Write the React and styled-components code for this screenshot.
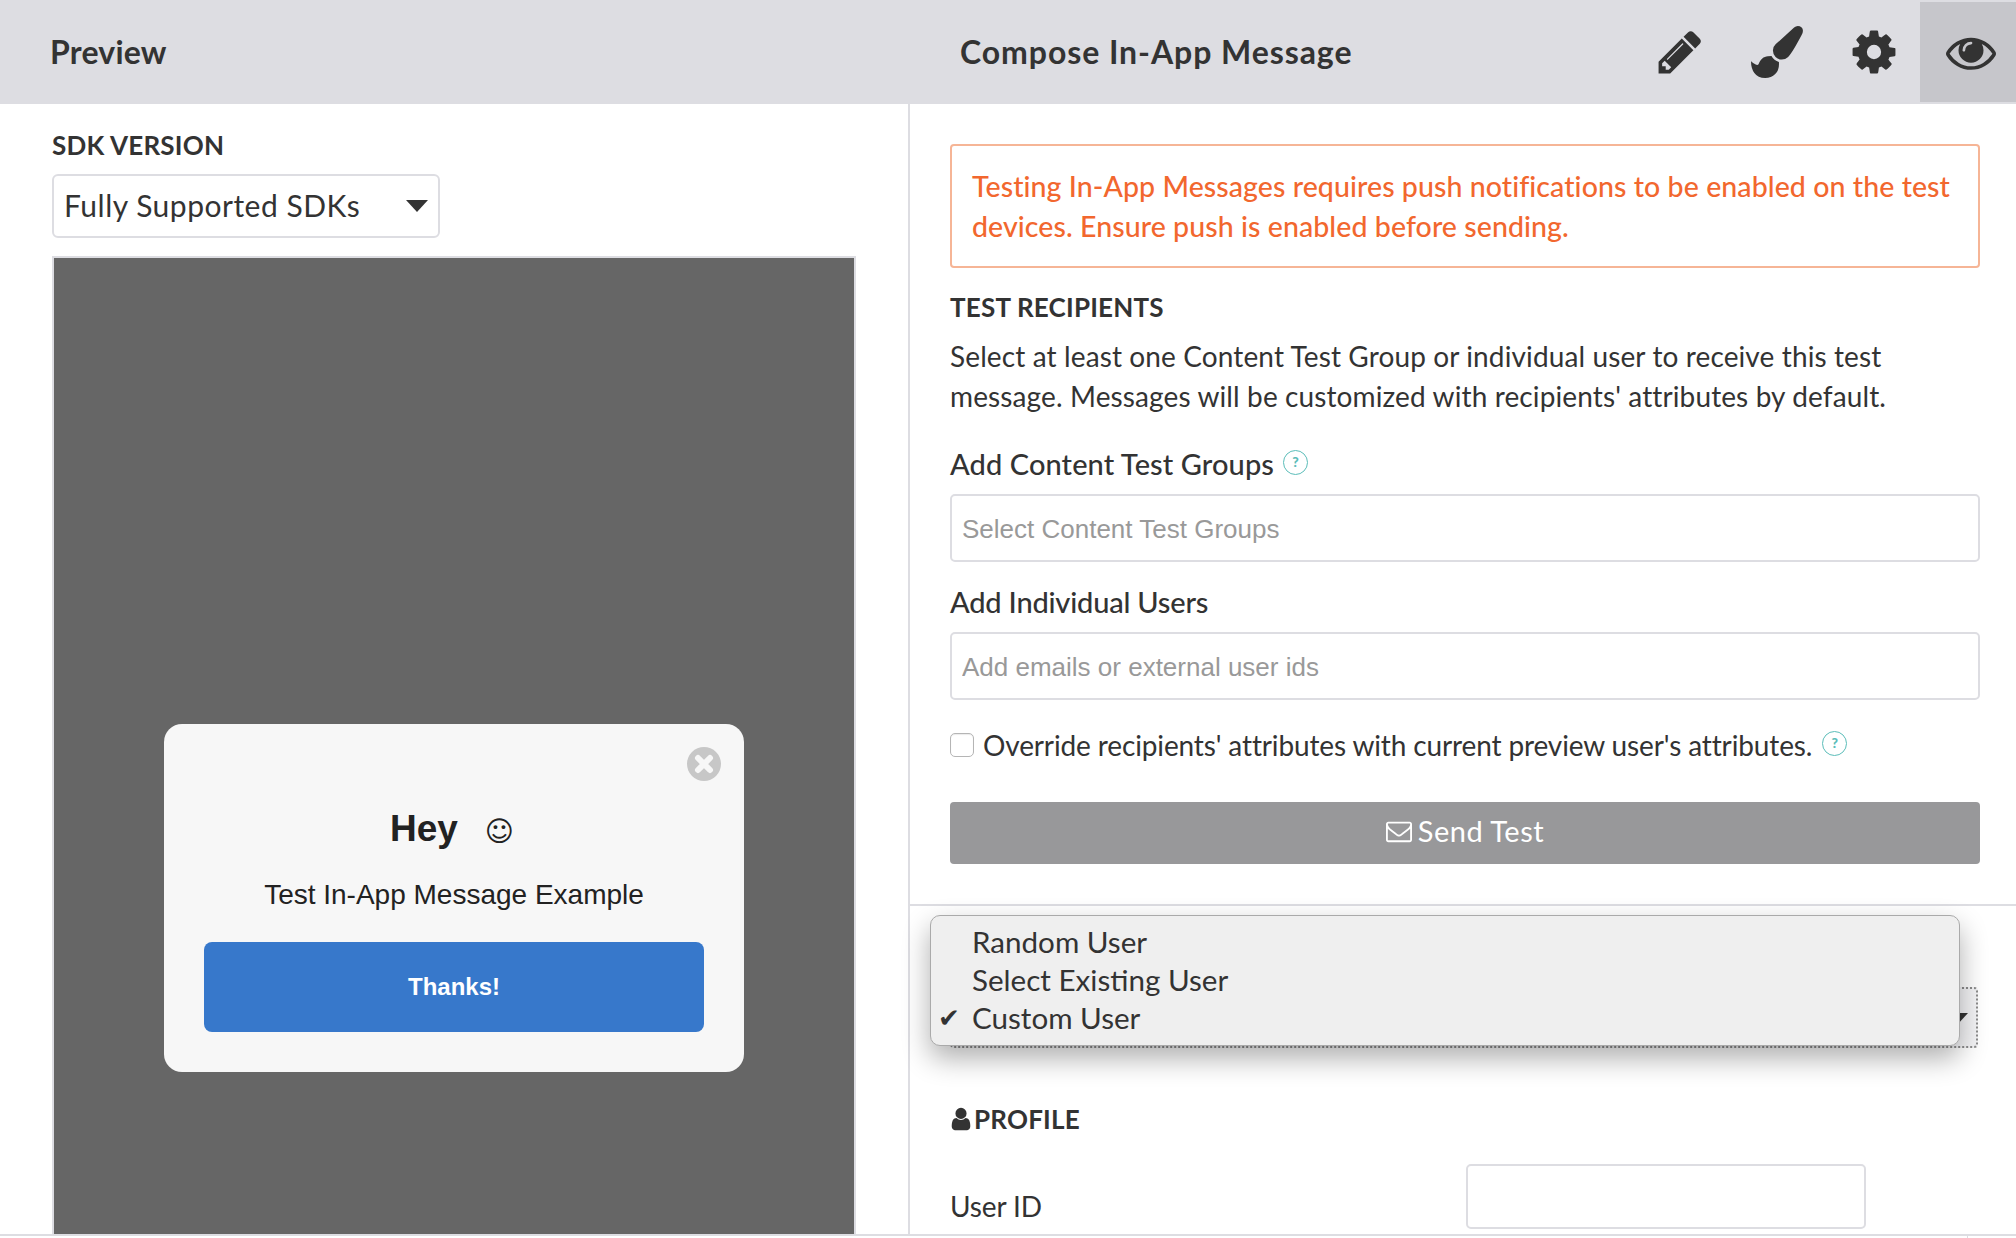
import React from 'react';
import styled, {createGlobalStyle} from 'styled-components';

const GlobalStyle = createGlobalStyle`
  html, body {
    margin: 0;
    padding: 0;
    background: #fff;
  }
  body {
    font-family: "Lato", "Liberation Sans", sans-serif;
    color: #333;
  }
`;

const ICONS = {
  pencil: 'M491 1536l91-91-235-235-91 91v107h128v128h107zm523-928q0-22-22-22-10 0-17 7l-542 542q-7 7-7 17 0 22 22 22 10 0 17-7l542-542q7-7 7-17zm-54-192l416 416-832 832h-416v-416zm683 96q0 53-37 90l-166 166-416-416 166-165q36-38 90-38 53 0 91 38l235 234q37 39 37 91z',
  brush: 'M1615 0q70 0 122.500 46.500t52.500 116.500q0 63-45 151-332 629-465 752-97 91-218 91-126 0-216.500-92.500t-90.500-219.500q0-128 92-212l638-579q59-54 130-54zm-909 1034q39 76 106.500 130t150.500 76l1 71q4 213-129.500 347t-348.500 134q-123 0-218-46.500t-152.500-127.500-86.500-183-29-220q7 5 41 30t62 44.500 59 36.500 46 17q41 0 55-37 25-66 57.500-112.500t69.500-76 88-47.500 103-25.500 125-10.500z',
  cog: 'M1152 896q0-106-75-181t-181-75-181 75-75 181 75 181 181 75 181-75 75-181zm512-109v222q0 12-8 23t-20 13l-185 28q-19 54-39 91 35 50 107 138 10 12 10 25t-9 23q-27 37-99 108t-94 71q-12 0-26-9l-138-108q-44 23-91 38-16 136-29 186-7 28-36 28h-222q-14 0-24.500-8.500t-11.500-21.500l-28-184q-49-16-90-37l-141 107q-10 9-25 9-14 0-25-11-126-114-165-168-7-10-7-23 0-12 8-23 15-21 51-66.500t54-70.500q-27-50-41-99l-183-27q-13-2-21-12.500t-8-23.500v-222q0-12 8-23t19-13l186-28q14-46 39-92-40-57-107-138-10-12-10-24 0-10 9-23 26-36 98.500-107.500t94.500-71.500q13 0 26 10l138 107q44-23 91-38 16-136 29-186 7-28 36-28h222q14 0 24.500 8.500t11.500 21.500l28 184q49 16 90 37l142-107q9-9 24-9 13 0 25 10 129 119 165 170 7 8 7 22 0 12-8 23-15 21-51 66.500t-54 70.500q26 50 41 98l183 28q13 2 21 12.500t8 23.500z',
  eye: 'M1664 960q-152-236-381-353 61 104 61 225 0 185-131.500 316.500t-316.500 131.500-316.500-131.500-131.500-316.500q0-121 61-225-229 117-381 353 133 205 333.500 326.500t434.500 121.500 434.500-121.500 333.500-326.500zm-720-384q0-20-14-34t-34-14q-125 0-214.500 89.500t-89.500 214.500q0 20 14 34t34 14 34-14 14-34q0-86 61-147t147-61q20 0 34-14t14-34zm848 384q0 34-20 69-140 230-376.500 368.500t-499.500 138.500-499.500-139-376.500-368q-20-35-20-69t20-69q140-229 376.500-368t499.500-139 499.500 139 376.500 368q20 35 20 69z',
  user: 'M1536 1399q0 109-62.500 187t-150.500 78h-854q-88 0-150.500-78t-62.500-187q0-85 8.500-160.500t31.500-152 58.500-131 94-89 134.500-34.500q131 128 313 128t313-128q76 0 134.500 34.500t94 89 58.500 131 31.500 152 8.500 160.500zm-256-887q0 159-112.500 271.500t-271.500 112.500-271.500-112.500-112.500-271.500 112.500-271.500 271.500-112.500 271.500 112.500 112.500 271.500z',
  envelope: 'M1664 1504v-768q-32 36-69 66-268 206-426 338-51 43-83 67t-86.500 48.500-102.500 24.500h-2q-48 0-102.500-24.500t-86.500-48.500-83-67q-158-132-426-338-37-30-69-66v768q0 13 9.500 22.500t22.500 9.500h1472q13 0 22.500-9.500t9.500-22.500zm0-1051v-24.500l-.5-13-3-12.500-5.500-9-9-7.500-14-2.500h-1472q-13 0-22.500 9.500t-9.500 22.500q0 168 147 284 193 152 401 317 6 5 35 29.500t46 37.500 44.500 31.500 50.500 27.500 43 9h2q20 0 43-9t50.500-27.500 44.500-31.500 46-37.500 35-29.500q208-165 401-317 54-43 100.500-115.500t46.500-131.500zm128-37v1088q0 66-47 113t-113 47h-1472q-66 0-113-47t-47-113v-1088q0-66 47-113t113-47h1472q66 0 113 47t47 113z'
};

const Icon = ({name, size}) => (
  <svg width={size} height={size} viewBox="0 0 1792 1792" fill="currentColor">
    <path d={ICONS[name]}/>
  </svg>
);

const Page = styled.div`
  width: 2016px;
  height: 1238px;
  overflow: hidden;
  display: flex;
  flex-direction: column;
`;

const Header = styled.header`
  height: 104px;
  box-sizing: border-box;
  padding: 2px 0;
  background: #dddde2;
  display: grid;
  grid-template-columns: 908px 1fr auto;
  align-items: center;
`;

const HeaderTitle = styled.h1`
  margin: -2px 0 0;
  padding-left: ${props => props.$inset}px;
  font-size: 32px;
  font-weight: 700;
  letter-spacing: ${props => props.$spacing}px;
  color: #333;
`;

const Tools = styled.div`
  display: flex;
  height: 100px;
`;

const ToolButton = styled.div`
  width: 96px;
  box-sizing: border-box;
  padding-left: ${props => props.$nudge || 0}px;
  display: flex;
  align-items: center;
  justify-content: center;
  color: #333;
  background: ${props => (props.$active ? '#c6c6cb' : 'transparent')};
`;

const Body = styled.main`
  flex: 1;
  min-height: 0;
  overflow: hidden;
  display: grid;
  grid-template-columns: 908px 1fr;
  border-bottom: 2px solid #dddde2;
`;

const FootStrip = styled.div`
  height: 2px;
  flex: none;
  padding-left: 1967px;
`;

const FootTick = styled.div`
  width: 1px;
  height: 2px;
  background: #dddde2;
`;

const LeftPane = styled.section`
  padding: 26px 52px 0 52px;
`;

const RightPane = styled.section`
  border-left: 2px solid #dddde2;
  min-width: 0;
`;

const FieldCaps = styled.h2`
  margin: ${props => props.$top || 0}px 0 0;
  font-size: 26px;
  line-height: 30px;
  font-weight: 700;
  letter-spacing: 0.2px;
  color: #333;
  display: flex;
  align-items: center;
`;

const SelectBox = styled.div`
  width: 388px;
  height: 64px;
  margin-top: 14px;
  box-sizing: border-box;
  padding: 0 10px 3px 10px;
  border: 2px solid #dddde2;
  border-radius: 6px;
  display: flex;
  align-items: center;
  justify-content: space-between;
  font-size: 30px;
  letter-spacing: 0.5px;
`;

const Caret = styled.span`
  width: 0;
  height: 0;
  margin-top: 3px;
  border-left: 11px solid transparent;
  border-right: 11px solid transparent;
  border-top: 12px solid #333;
`;

const Phone = styled.div`
  width: 804px;
  height: 1284px;
  margin-top: 18px;
  box-sizing: border-box;
  border: 2px solid #dddde2;
  background: #666;
  display: flex;
  align-items: center;
  justify-content: center;
`;

const Modal = styled.div`
  position: relative;
  width: 580px;
  height: 348px;
  box-sizing: border-box;
  padding: 83px 40px 40px;
  border-radius: 18px;
  background: #f7f7f7;
  color: #222;
  font-family: "Liberation Sans", Arial, sans-serif;
  text-align: center;
`;

const CloseDot = styled.svg`
  position: absolute;
  top: 23px;
  right: 23px;
`;

const ModalTitle = styled.div`
  height: 41px;
  font-size: 37px;
  line-height: 44px;
  font-weight: 700;
`;

const Smiley = styled.span`
  margin-left: 27px;
  padding-right: 4px;
  font-family: "DejaVu Sans", sans-serif;
  font-weight: 400;
  font-size: 28px;
`;

const ModalText = styled.div`
  margin-top: 29px;
  font-size: 28px;
  line-height: 36px;
`;

const ModalButton = styled.div`
  height: 90px;
  margin-top: 29px;
  border-radius: 8px;
  background: #3778cb;
  color: #fff;
  font-size: 24px;
  font-weight: 700;
  display: flex;
  align-items: center;
  justify-content: center;
`;

const TestSection = styled.div`
  padding: 40px 36px 40px 40px;
  border-bottom: 2px solid #dddde2;
`;

const Alert = styled.div`
  height: 124px;
  box-sizing: border-box;
  padding: 20px 20px 0;
  border: 2px solid #f6b596;
  border-radius: 4px;
  color: #f2672e;
  font-size: 28.5px;
  font-weight: 500;
  letter-spacing: 0.08px;
  line-height: 40px;
  white-space: nowrap;
`;

const Paragraph = styled.p`
  margin: 14px 0 0;
  font-size: 28px;
  letter-spacing: 0.12px;
  line-height: 40px;
  white-space: nowrap;
`;

const FieldLabel = styled.div`
  margin-top: ${props => props.$top}px;
  font-size: 29px;
  letter-spacing: ${props => props.$spacing}px;
  line-height: 30px;
  font-weight: 500;
  height: 30px;
  position: relative;
  top: -1px;
  display: flex;
  align-items: center;
  gap: 9px;
`;

const HelpIcon = styled.span`
  width: 25px;
  height: 25px;
  margin-top: -4px;
  margin-left: ${props => props.$left || 0}px;
  box-sizing: border-box;
  border: 1px solid #5bbdb9;
  border-radius: 50%;
  color: #5bbdb9;
  font-size: 14px;
  font-weight: 900;
  display: flex;
  align-items: center;
  justify-content: center;
`;

const TextInput = styled.input`
  display: block;
  width: 100%;
  height: 68px;
  margin-top: 14px;
  box-sizing: border-box;
  padding: 2px 10px 0;
  border: 2px solid #dddde2;
  border-radius: 5px;
  outline: none;
  background: #fff;
  font-family: "Liberation Sans", Arial, sans-serif;
  font-size: 26px;

  &::placeholder {
    color: #999;
    opacity: 1;
  }
`;

const CheckRow = styled.label`
  margin-top: 30px;
  height: 30px;
  font-size: 28px;
  letter-spacing: -0.13px;
  line-height: 30px;
  display: flex;
  align-items: center;
  white-space: nowrap;
`;

const CheckBox = styled.input`
  appearance: none;
  width: 24px;
  height: 24px;
  margin: 0 9px 0 0;
  border: 1px solid #b5b5b5;
  border-radius: 5px;
  background: #fff;
  box-shadow: inset 0 1px 1px rgba(0, 0, 0, 0.08);
`;

const SendButton = styled.div`
  height: 62px;
  margin-top: 42px;
  box-sizing: border-box;
  padding-bottom: 5px;
  border-radius: 4px;
  background: #98989a;
  color: #fff;
  font-size: 29px;
  letter-spacing: 0.5px;
  display: flex;
  align-items: center;
  justify-content: center;
  gap: 6px;
`;

const ProfileSection = styled.div`
  position: relative;
  padding: 81px 38px 0 40px;
`;

const DottedSelect = styled.div`
  height: 61px;
  box-sizing: border-box;
  border: 2px dotted #8c8c8c;
  border-radius: 4px;
  background: #f4f4f6;
  display: flex;
  align-items: center;
  justify-content: flex-end;
  padding-right: 8px;
`;

const Menu = styled.ul`
  position: absolute;
  top: 9px;
  left: 20px;
  width: 1030px;
  height: 131px;
  box-sizing: border-box;
  margin: 0;
  padding: 7px 0 0 41px;
  list-style: none;
  border: 1px solid #aaa;
  border-radius: 10px;
  background: #efefef;
  box-shadow: 0 12px 28px rgba(0, 0, 0, 0.32);
  font-size: 29.6px;
  line-height: 38px;
`;

const MenuItem = styled.li`
  position: relative;
`;

const CheckMark = styled.span`
  position: absolute;
  left: -34px;
  font-family: "DejaVu Sans", sans-serif;
  font-size: 26px;
`;

const ProfileIcon = styled.span`
  display: flex;
  margin-left: -2px;
`;

const ProfileRow = styled.div`
  display: grid;
  grid-template-columns: 516px 400px;
  margin-top: 30px;
  align-items: end;
`;

const RowLabel = styled.div`
  font-size: 28px;
  letter-spacing: -0.1px;
  line-height: 30px;
  padding-bottom: 8px;
`;

const RowInput = styled(TextInput)`
  height: 65px;
  margin: 0;
`;

const App = () => (
  <Page>
    <GlobalStyle/>
    <Header>
      <HeaderTitle $inset={50} $spacing={0.2}>Preview</HeaderTitle>
      <HeaderTitle $inset={52} $spacing={0.93}>Compose In-App Message</HeaderTitle>
      <Tools>
        <ToolButton><Icon name="pencil" size={50}/></ToolButton>
        <ToolButton $nudge={2}><Icon name="brush" size={52}/></ToolButton>
        <ToolButton $nudge={3}><Icon name="cog" size={50}/></ToolButton>
        <ToolButton $active $nudge={5}><Icon name="eye" size={50}/></ToolButton>
      </Tools>
    </Header>
    <Body>
      <LeftPane>
        <FieldCaps>SDK VERSION</FieldCaps>
        <SelectBox>
          Fully Supported SDKs
          <Caret/>
        </SelectBox>
        <Phone>
          <Modal>
            <CloseDot width="34" height="34" viewBox="0 0 34 34">
              <circle cx="17" cy="17" r="17" fill="#c7c7c7"/>
              <path d="M11 11L23 23M23 11L11 23" stroke="#f7f7f7" strokeWidth="6" strokeLinecap="round"/>
            </CloseDot>
            <ModalTitle>Hey<Smiley>☺</Smiley></ModalTitle>
            <ModalText>Test In-App Message Example</ModalText>
            <ModalButton>Thanks!</ModalButton>
          </Modal>
        </Phone>
      </LeftPane>
      <RightPane>
        <TestSection>
          <Alert>
            Testing In-App Messages requires push notifications to be enabled on the test<br/>
            devices. Ensure push is enabled before sending.
          </Alert>
          <FieldCaps $top={24}>TEST RECIPIENTS</FieldCaps>
          <Paragraph>
            Select at least one Content Test Group or individual user to receive this test<br/>
            message. Messages will be customized with recipients' attributes by default.
          </Paragraph>
          <FieldLabel $top={34} $spacing={0.1}>Add Content Test Groups <HelpIcon>?</HelpIcon></FieldLabel>
          <TextInput placeholder="Select Content Test Groups"/>
          <FieldLabel $top={26} $spacing={-0.2}>Add Individual Users</FieldLabel>
          <TextInput placeholder="Add emails or external user ids"/>
          <CheckRow>
            <CheckBox type="checkbox"/>
            Override recipients' attributes with current preview user's attributes.
            <HelpIcon $left={10}>?</HelpIcon>
          </CheckRow>
          <SendButton><Icon name="envelope" size={26}/>Send Test</SendButton>
        </TestSection>
        <ProfileSection>
          <Menu>
            <MenuItem>Random User</MenuItem>
            <MenuItem>Select Existing User</MenuItem>
            <MenuItem><CheckMark>✔</CheckMark>Custom User</MenuItem>
          </Menu>
          <DottedSelect><Caret/></DottedSelect>
          <FieldCaps $top={56}>
            <ProfileIcon><Icon name="user" size={26}/></ProfileIcon>
            PROFILE
          </FieldCaps>
          <ProfileRow>
            <RowLabel>User ID</RowLabel>
            <RowInput/>
          </ProfileRow>
        </ProfileSection>
      </RightPane>
    </Body>
    <FootStrip><FootTick/></FootStrip>
  </Page>
);

export default App;
